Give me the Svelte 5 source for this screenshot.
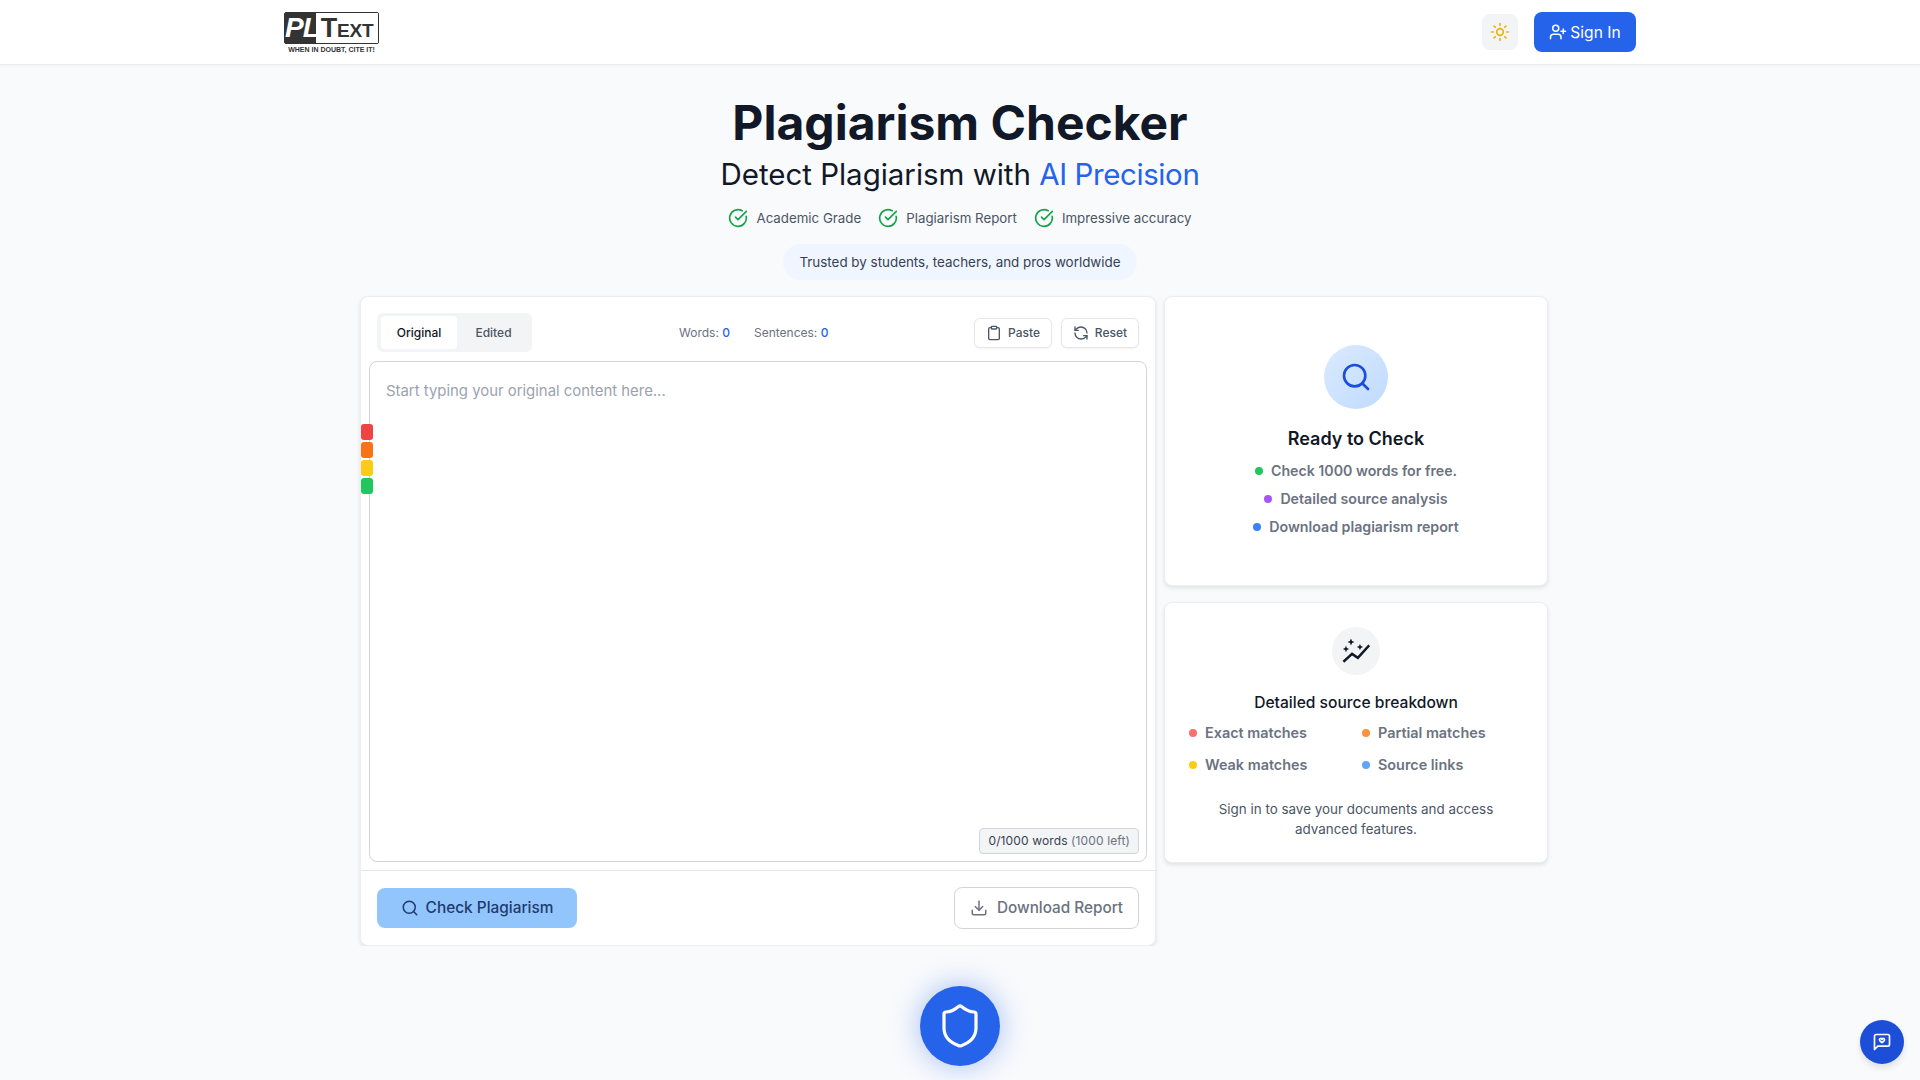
<script>
  const badges = ["Academic Grade", "Plagiarism Report", "Impressive accuracy"];
  const severities = ["#ef4444", "#f97316", "#facc15", "#22c55e"];
  const readyItems = [
    { label: "Check 1000 words for free.", color: "#22c55e" },
    { label: "Detailed source analysis", color: "#a855f7" },
    { label: "Download plagiarism report", color: "#3b82f6" },
  ];
  const breakdown = [
    { label: "Exact matches", color: "#f87171" },
    { label: "Partial matches", color: "#fb923c" },
    { label: "Weak matches", color: "#facc15" },
    { label: "Source links", color: "#60a5fa" },
  ];
</script>

<header class="nav">
  <div class="nav-inner">
    <div class="logo">
      <div class="logo-mark">
        <span class="logo-pl">PL</span>
        <span class="logo-text">Text</span>
      </div>
      <span class="logo-tag">WHEN IN DOUBT, CITE IT!</span>
    </div>
    <div class="nav-actions">
      <button type="button" class="theme-btn" aria-label="Theme">
        <svg width="20" height="20" viewBox="0 0 24 24" fill="none" stroke="#eab308" stroke-width="2" stroke-linecap="round" stroke-linejoin="round">
          <circle cx="12" cy="12" r="4" />
          <path d="M12 2v2M12 20v2M4.93 4.93l1.41 1.41M17.66 17.66l1.41 1.41M2 12h2M20 12h2M6.34 17.66l-1.41 1.41M19.07 4.93l-1.41 1.41" />
        </svg>
      </button>
      <button type="button" class="signin-btn">
        <svg width="18" height="18" viewBox="0 0 24 24" fill="none" stroke="currentColor" stroke-width="2" stroke-linecap="round" stroke-linejoin="round">
          <path d="M16 21v-2a4 4 0 0 0-4-4H6a4 4 0 0 0-4 4v2" />
          <circle cx="9" cy="7" r="4" />
          <path d="M19 8v6M22 11h-6" />
        </svg>
        Sign In
      </button>
    </div>
  </div>
</header>

<main class="page">
  <section class="hero">
    <h1>Plagiarism Checker</h1>
    <h2>Detect Plagiarism with <span class="accent">AI Precision</span></h2>
    <div class="badges">
      {#each badges as badge}
        <span class="badge">
          <svg width="20" height="20" viewBox="0 0 24 24" fill="none" stroke="#16a34a" stroke-width="2" stroke-linecap="round" stroke-linejoin="round">
            <path d="M21.801 10A10 10 0 1 1 17 3.335" />
            <path d="m9 11 3 3L22 4" />
          </svg>
          {badge}
        </span>
      {/each}
    </div>
    <p class="trusted">Trusted by students, teachers, and pros worldwide</p>
  </section>

  <section class="workspace">
    <div class="card editor">
      <div class="toolbar">
        <div class="tabs">
          <button type="button" class="tab active">Original</button>
          <button type="button" class="tab">Edited</button>
        </div>
        <div class="stats">
          <span>Words: <b>0</b></span>
          <span>Sentences: <b>0</b></span>
        </div>
        <div class="tools">
          <button type="button" class="tool-btn">
            <svg width="16" height="16" viewBox="0 0 24 24" fill="none" stroke="currentColor" stroke-width="2" stroke-linecap="round" stroke-linejoin="round">
              <rect x="8" y="2" width="8" height="4" rx="1" />
              <path d="M16 4h2a2 2 0 0 1 2 2v14a2 2 0 0 1-2 2H6a2 2 0 0 1-2-2V6a2 2 0 0 1 2-2h2" />
            </svg>
            Paste
          </button>
          <button type="button" class="tool-btn">
            <svg width="16" height="16" viewBox="0 0 24 24" fill="none" stroke="currentColor" stroke-width="2" stroke-linecap="round" stroke-linejoin="round">
              <path d="M21 12a9 9 0 0 0-9-9 9.75 9.75 0 0 0-6.74 2.74L3 8" />
              <path d="M3 3v5h5" />
              <path d="M3 12a9 9 0 0 0 9 9 9.75 9.75 0 0 0 6.74-2.74L21 16" />
              <path d="M16 16h5v5" />
            </svg>
            Reset
          </button>
        </div>
      </div>

      <div class="text-area">
        <span class="placeholder">Start typing your original content here...</span>
        <span class="counter">0/1000 words <em>(1000 left)</em></span>
      </div>

      <div class="severity">
        {#each severities as color}
          <span style="background: {color}"></span>
        {/each}
      </div>

      <div class="actions">
        <button type="button" class="check-btn">
          <svg width="18" height="18" viewBox="0 0 24 24" fill="none" stroke="currentColor" stroke-width="2" stroke-linecap="round" stroke-linejoin="round">
            <path d="m21 21-4.34-4.34" />
            <circle cx="11" cy="11" r="8" />
          </svg>
          Check Plagiarism
        </button>
        <button type="button" class="download-btn">
          <svg width="18" height="18" viewBox="0 0 24 24" fill="none" stroke="currentColor" stroke-width="2" stroke-linecap="round" stroke-linejoin="round">
            <path d="M12 15V3" />
            <path d="M21 15v4a2 2 0 0 1-2 2H5a2 2 0 0 1-2-2v-4" />
            <path d="m7 10 5 5 5-5" />
          </svg>
          Download Report
        </button>
      </div>
    </div>

    <aside class="side">
      <div class="card ready">
        <div class="ready-icon">
          <svg width="32" height="32" viewBox="0 0 24 24" fill="none" stroke="#1d4ed8" stroke-width="2" stroke-linecap="round" stroke-linejoin="round">
            <path d="m21 21-4.34-4.34" />
            <circle cx="11" cy="11" r="8" />
          </svg>
        </div>
        <h3>Ready to Check</h3>
        <ul>
          {#each readyItems as item}
            <li><i style="background: {item.color}"></i>{item.label}</li>
          {/each}
        </ul>
      </div>

      <div class="card details">
        <div class="details-icon">
          <svg width="28" height="28" viewBox="0 0 24 24" fill="none" stroke="#111827" stroke-width="2.2" stroke-linecap="square" stroke-linejoin="miter">
            <path d="M2 20.5l6.6-6 5 3.4 9-10" />
            <path fill="#111827" stroke="none" d="M7.7 1.3l.9 2.1 2.1.9-2.1.9-.9 2.1-.9-2.1-2.1-.9 2.1-.9zM3.4 7.6l.8 1.9 1.9.8-1.9.8-.8 1.9-.8-1.9-1.9-.8 1.9-.8zM15.4 5.9l.8 1.9 1.9.8-1.9.8-.8 1.9-.8-1.9-1.9-.8 1.9-.8z" />
          </svg>
        </div>
        <h4>Detailed source breakdown</h4>
        <div class="legend">
          {#each breakdown as item}
            <span class="legend-item"><i style="background: {item.color}"></i>{item.label}</span>
          {/each}
        </div>
        <p>Sign in to save your documents and access advanced features.</p>
      </div>
    </aside>
  </section>
</main>

<button type="button" class="shield-btn" aria-label="Plagiarism protection">
  <svg width="48" height="48" viewBox="0 0 24 24" fill="none" stroke="#fff" stroke-width="1.6" stroke-linecap="round" stroke-linejoin="round">
    <path d="M20 13c0 5-3.5 7.5-7.66 8.95a1 1 0 0 1-.67-.01C7.5 20.5 4 18 4 13V6a1 1 0 0 1 1-1c2 0 4.5-1.2 6.24-2.72a1.17 1.17 0 0 1 1.52 0C14.51 3.81 17 5 19 5a1 1 0 0 1 1 1z" />
  </svg>
</button>

<button type="button" class="chat-btn" aria-label="Feedback">
  <svg width="20" height="20" viewBox="0 0 24 24" fill="none" stroke="#fff" stroke-width="2" stroke-linecap="round" stroke-linejoin="round">
    <path d="M21 15a2 2 0 0 1-2 2H7l-4 4V5a2 2 0 0 1 2-2h14a2 2 0 0 1 2 2z" />
    <path d="M9 9.5a1.5 1.5 0 0 1 3-.5 1.5 1.5 0 0 1 3 .5c0 1.2-1.5 2-3 3.2-1.5-1.2-3-2-3-3.2z" />
  </svg>
</button>

<style>
  :global(body) {
    margin: 0;
    background: #f9fafc;
    font-family: Inter, "Liberation Sans", sans-serif;
    color: #111827;
  }

  button {
    font-family: inherit;
    cursor: pointer;
  }

  .nav {
    height: 65px;
    box-sizing: border-box;
    background: #fff;
    border-bottom: 1px solid #e9ebef;
    box-shadow: 0 1px 2px rgba(0, 0, 0, 0.03);
  }

  .nav-inner {
    max-width: 1352px;
    height: 64px;
    margin: 0 auto;
    display: flex;
    align-items: center;
    justify-content: space-between;
  }

  .logo {
    display: flex;
    flex-direction: column;
    align-items: center;
    width: 95px;
  }

  .logo-mark {
    display: flex;
    width: 95px;
    height: 32px;
    box-sizing: border-box;
    background: #333;
    border: 1px solid #333;
    border-radius: 2px;
  }

  .logo-pl {
    width: 31px;
    text-align: center;
    color: #fff;
    font: italic 700 28px/30px "Liberation Sans", sans-serif;
    letter-spacing: -1px;
  }

  .logo-text {
    flex: 1;
    background: #fff;
    color: #333;
    text-align: center;
    font: 700 27px/31px "Liberation Sans", sans-serif;
    font-variant: small-caps;
    letter-spacing: -0.2px;
  }

  .logo-tag {
    margin-top: 2px;
    font: 700 7px/7px "Liberation Sans", sans-serif;
    color: #333;
    white-space: nowrap;
  }

  .nav-actions {
    display: flex;
    align-items: center;
    gap: 16px;
  }

  .theme-btn {
    width: 36px;
    height: 36px;
    padding: 0;
    display: flex;
    align-items: center;
    justify-content: center;
    background: #f3f4f6;
    border: none;
    border-radius: 8px;
  }

  .signin-btn {
    width: 102px;
    height: 40px;
    display: flex;
    align-items: center;
    justify-content: center;
    gap: 3px;
    padding: 0;
    background: #2563eb;
    color: #fff;
    border: none;
    border-radius: 8px;
    font-size: 15.6px;
    font-weight: 400;
  }

  .hero {
    display: flex;
    flex-direction: column;
    align-items: center;
    padding-top: 28px;
  }

  h1 {
    margin: 0;
    font-size: 48px;
    line-height: 60px;
    font-weight: 700;
    color: #111827;
  }

  h2 {
    margin: 2.5px 0 0;
    font-size: 29.5px;
    line-height: 36px;
    font-weight: 400;
    letter-spacing: -0.03px;
    color: #111827;
  }

  .accent {
    color: #2563eb;
    letter-spacing: -0.4px;
  }

  .badges {
    display: flex;
    gap: 17px;
    margin-top: 16px;
  }

  .badge {
    display: flex;
    align-items: center;
    gap: 8px;
    font-size: 13.3px;
    line-height: 20px;
    color: #4b5563;
  }

  .trusted {
    margin: 16px 0 0;
    padding: 8px 16px;
    background: #eff6ff;
    border-radius: 999px;
    font-size: 13.4px;
    line-height: 20px;
    color: #374151;
  }

  .workspace {
    display: grid;
    grid-template-columns: 796px 384px;
    gap: 8px;
    margin: 16px 0 0 360px;
    align-items: start;
  }

  .card {
    box-sizing: border-box;
    background: #fff;
    border: 1px solid #eceef1;
    border-radius: 8px;
    box-shadow: 0 2px 4px rgba(0, 0, 0, 0.1);
  }

  .editor {
    position: relative;
    height: 650px;
    display: flex;
    flex-direction: column;
  }

  .toolbar {
    display: flex;
    align-items: center;
    height: 64px;
    box-sizing: border-box;
    padding: 8px 16px 0;
  }

  .tabs {
    display: flex;
    flex: none;
    width: 155px;
    height: 39px;
    box-sizing: border-box;
    padding: 3px 2px 3px 4px;
    background: #f3f4f6;
    border-radius: 6px;
  }

  .tab {
    flex: none;
    width: 73px;
    padding: 0;
    background: transparent;
    border: none;
    border-radius: 4px;
    font-size: 12px;
    font-weight: 500;
    color: #4b5563;
  }

  .tab.active {
    width: 76px;
    background: #fff;
    color: #111827;
  }

  .stats {
    display: flex;
    gap: 24px;
    margin-left: 147px;
    font-size: 12px;
    color: #6b7280;
  }

  .stats b {
    font-weight: 500;
    color: #2563eb;
  }

  .tools {
    display: flex;
    gap: 9px;
    margin-left: auto;
  }

  .tool-btn {
    width: 78px;
    height: 30px;
    display: flex;
    align-items: center;
    justify-content: center;
    gap: 6px;
    padding: 0;
    background: #fff;
    border: 1px solid #e5e7eb;
    border-radius: 6px;
    box-shadow: 0 1px 2px rgba(0, 0, 0, 0.05);
    font-size: 12px;
    font-weight: 500;
    color: #4b5563;
  }

  .text-area {
    position: relative;
    height: 501px;
    box-sizing: border-box;
    margin: 0 8px;
    padding: 17px 16px 16px;
    border: 1px solid #d1d5db;
    border-radius: 8px;
    background: #fff;
  }

  .placeholder {
    font-size: 14.9px;
    line-height: 24px;
    color: #9ca3af;
  }

  .counter {
    position: absolute;
    right: 7px;
    bottom: 7px;
    padding: 4px 8px;
    background: #f3f4f6;
    border: 1px solid #d1d5db;
    border-radius: 4px;
    font-size: 12px;
    line-height: 16px;
    letter-spacing: 0.12px;
    color: #374151;
    white-space: nowrap;
  }

  .counter em {
    font-style: normal;
    color: #6b7280;
  }

  .severity {
    position: absolute;
    left: 0;
    top: 127px;
    display: flex;
    flex-direction: column;
    gap: 2px;
  }

  .severity span {
    display: block;
    width: 12px;
    height: 16px;
    border-radius: 3px;
  }

  .actions {
    margin-top: 8px;
    padding: 16px;
    border-top: 1px solid #e5e7eb;
    display: flex;
    align-items: center;
    justify-content: space-between;
  }

  .check-btn {
    width: 200px;
    height: 40px;
    display: flex;
    align-items: center;
    justify-content: center;
    gap: 7px;
    padding: 0;
    background: #93c5fd;
    color: #1e3a6e;
    border: none;
    border-radius: 8px;
    font-size: 15.4px;
    font-weight: 500;
  }

  .download-btn {
    width: 185px;
    height: 42px;
    display: flex;
    align-items: center;
    justify-content: center;
    gap: 9px;
    padding: 0;
    background: #fff;
    color: #6b7280;
    border: 1px solid #d1d5db;
    border-radius: 8px;
    font-size: 15.3px;
    font-weight: 500;
  }

  .side {
    display: flex;
    flex-direction: column;
    gap: 16px;
  }

  .ready {
    height: 290px;
    display: flex;
    flex-direction: column;
    align-items: center;
    padding-top: 48px;
  }

  .ready-icon {
    width: 64px;
    height: 64px;
    display: flex;
    align-items: center;
    justify-content: center;
    border-radius: 50%;
    background: linear-gradient(135deg, #dbeafe, #bfdbfe);
  }

  h3 {
    margin: 16px 0 0;
    font-size: 18px;
    line-height: 28px;
    font-weight: 600;
    color: #111827;
  }

  ul {
    list-style: none;
    margin: 8.5px 0 0;
    padding: 0;
    display: flex;
    flex-direction: column;
    align-items: center;
    gap: 8px;
  }

  li, .legend-item {
    display: flex;
    align-items: center;
    font-size: 14.2px;
    line-height: 20px;
    font-weight: 600;
    color: #6b7280;
  }

  .legend-item {
    font-size: 14.4px;
  }

  li i {
    width: 8px;
    height: 8px;
    margin-right: 8px;
    border-radius: 50%;
  }

  .details {
    height: 261px;
    display: flex;
    flex-direction: column;
    align-items: center;
    padding-top: 24px;
  }

  .details-icon {
    width: 48px;
    height: 48px;
    display: flex;
    align-items: center;
    justify-content: center;
    border-radius: 50%;
    background: #f3f4f6;
  }

  h4 {
    margin: 16px 0 0;
    font-size: 15.6px;
    line-height: 24px;
    font-weight: 500;
    color: #111827;
  }

  .legend {
    align-self: stretch;
    display: grid;
    grid-template-columns: 173px 1fr;
    row-gap: 12px;
    margin-top: 8.5px;
    padding-left: 24px;
  }

  .legend-item i {
    width: 8px;
    height: 8px;
    margin-right: 8px;
    border-radius: 50%;
  }

  .details p {
    margin: 24px 24px 0;
    text-align: center;
    font-size: 13.4px;
    line-height: 20px;
    color: #4b5563;
  }

  .shield-btn {
    position: fixed;
    left: 920px;
    top: 986px;
    width: 80px;
    height: 80px;
    display: flex;
    align-items: center;
    justify-content: center;
    padding: 0;
    background: #2563eb;
    border: none;
    border-radius: 50%;
    box-shadow: 0 0 30px rgba(37, 99, 235, 0.4);
  }

  .chat-btn {
    position: fixed;
    right: 16px;
    bottom: 16px;
    width: 44px;
    height: 44px;
    display: flex;
    align-items: center;
    justify-content: center;
    padding: 0;
    background: #1d4ed8;
    border: none;
    border-radius: 50%;
    box-shadow: 0 4px 6px rgba(0, 0, 0, 0.1);
  }
</style>
